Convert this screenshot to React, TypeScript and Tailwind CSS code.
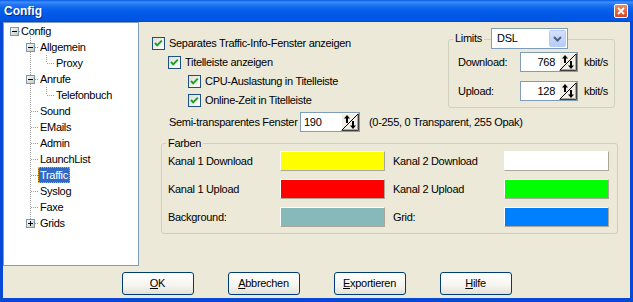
import React from "react";

type TreeItem = { label: string; level: number; box?: "minus" | "plus"; selected?: boolean };

const treeItems: TreeItem[] = [
  { label: "Config", level: 0, box: "minus" },
  { label: "Allgemein", level: 1, box: "minus" },
  { label: "Proxy", level: 2 },
  { label: "Anrufe", level: 1, box: "minus" },
  { label: "Telefonbuch", level: 2 },
  { label: "Sound", level: 1 },
  { label: "EMails", level: 1 },
  { label: "Admin", level: 1 },
  { label: "LaunchList", level: 1 },
  { label: "Traffic", level: 1, selected: true },
  { label: "Syslog", level: 1 },
  { label: "Faxe", level: 1 },
  { label: "Grids", level: 1, box: "plus" },
];

const indentClass: Record<number, string> = {
  0: "pl-[17px]",
  1: "pl-[34px]",
  2: "pl-[50px]",
};

function ExpandBox({ cx, cy, kind }: { cx: number; cy: number; kind: "minus" | "plus" }) {
  return (
    <g>
      <rect x={cx - 4 + 0.5} y={cy - 4 + 0.5} width={8} height={8} fill="url(#boxfill)" stroke="#7898B5" />
      <line x1={cx - 2} y1={cy + 0.5} x2={cx + 3} y2={cy + 0.5} stroke="#000" />
      {kind === "plus" && <line x1={cx + 0.5} y1={cy - 2} x2={cx + 0.5} y2={cy + 3} stroke="#000" />}
    </g>
  );
}

function TreeLines() {
  const rowY = (i: number) => 16 * i + 8;
  const dot = { stroke: "#A0A0A0", strokeDasharray: "1 1", shapeRendering: "crispEdges" as const };
  return (
    <svg className="absolute left-0 top-0 pointer-events-none" width={134} height={240}>
      <defs>
        <linearGradient id="boxfill" x1="0" y1="0" x2="1" y2="1">
          <stop offset="0" stopColor="#FFFFFF" />
          <stop offset="1" stopColor="#C6C3B5" />
        </linearGradient>
      </defs>
      {/* level 1 trunk */}
      <line x1={26.5} y1={13} x2={26.5} y2={rowY(12)} {...dot} />
      {/* level 0 stub */}
      <line x1={15} y1={8.5} x2={17} y2={8.5} {...dot} />
      {treeItems.map((it, i) =>
        it.level === 1 ? (
          <line key={i} x1={it.box ? 31 : 27} y1={rowY(i) + 0.5} x2={34} y2={rowY(i) + 0.5} {...dot} />
        ) : null
      )}
      {/* level 2 branches */}
      {[2, 4].map((i) => (
        <g key={i}>
          <line x1={42.5} y1={rowY(i) - 8} x2={42.5} y2={rowY(i)} {...dot} />
          <line x1={43} y1={rowY(i) + 0.5} x2={50} y2={rowY(i) + 0.5} {...dot} />
        </g>
      ))}
      <ExpandBox cx={10} cy={8} kind="minus" />
      <ExpandBox cx={26} cy={rowY(1)} kind="minus" />
      <ExpandBox cx={26} cy={rowY(3)} kind="minus" />
      <ExpandBox cx={26} cy={rowY(12)} kind="plus" />
    </svg>
  );
}

function CheckBox() {
  return (
    <svg width={13} height={13} className="shrink-0">
      <defs>
        <linearGradient id="cbfill" x1="0" y1="0" x2="1" y2="1">
          <stop offset="0" stopColor="#DCDCD7" />
          <stop offset="1" stopColor="#FFFFFF" />
        </linearGradient>
      </defs>
      <rect x={0.5} y={0.5} width={12} height={12} fill="url(#cbfill)" stroke="#1C5180" />
      <path d="M3 6 L5.2 8.4 L9.8 3.6" fill="none" stroke="#21A121" strokeWidth={2} />
    </svg>
  );
}

function CheckRow({ label, indent }: { label: string; indent: string }) {
  return (
    <div className={`flex items-center h-[19px] gap-[4px] ${indent}`}>
      <CheckBox />
      <span>{label}</span>
    </div>
  );
}

function SpinButton() {
  return (
    <svg width={18} height={18} className="shrink-0">
      <rect x={0} y={0} width={18} height={18} fill="#F1EFE6" />
      <path d="M0.5 17.5V0.5H17.5" fill="none" stroke="#FFFFFF" />
      <path d="M0.5 17.5H17.5V0.5" fill="none" stroke="#404040" />
      <path d="M1.5 16.5H16.5V1.5" fill="none" stroke="#ACA899" />
      <line x1={1} y1={17} x2={17} y2={1} stroke="#000" />
      <polygon points="6,2 9,5.5 7,5.5 7,10 5,10 5,5.5 3,5.5" fill="#000" />
      <polygon points="12,16 15,12.5 13,12.5 13,8 11,8 11,12.5 9,12.5" fill="#000" />
    </svg>
  );
}

function SpinEdit({ value, width, align }: { value: string; width: string; align: "left" | "right" }) {
  return (
    <div className="flex items-center h-[20px] border border-[#7F9DB9] bg-white">
      <div className={`${width} ${align === "right" ? "text-right pr-[4px]" : "pl-[3px]"}`}>{value}</div>
      <SpinButton />
    </div>
  );
}

function Swatch({ color }: { color: string }) {
  return (
    <div
      className={`w-[105px] h-[20px] border border-t-white border-l-white border-r-[#ACA899] border-b-[#ACA899] ${color}`}
    />
  );
}

function XpButton({ first, rest }: { first: string; rest: string }) {
  return (
    <div className="w-[72px] h-[23px] flex items-center justify-center rounded-[3px] border border-[#003C74] bg-[linear-gradient(to_bottom,#FFFFFF_0%,#F5F4EF_60%,#E3E1D6_100%)]">
      <span>
        <span className="underline">{first}</span>
        {rest}
      </span>
    </div>
  );
}

export default function App() {
  return (
    <div className="w-[633px] h-[302px] flex flex-col bg-[#0848D6] text-[11px] tracking-[-0.3px] text-black font-['Liberation_Sans',Arial,sans-serif] overflow-hidden">
      {/* Title bar */}
      <div className="h-[22px] shrink-0 flex items-center justify-between pl-[4px] pr-[5px] bg-[linear-gradient(to_bottom,#0A5DE8_0%,#3D8FFB_10%,#2477F3_20%,#0862EC_40%,#0058E6_70%,#0056E4_90%,#0349CF_100%)]">
        <span className="text-white font-bold text-[12px] tracking-normal [text-shadow:1px_1px_0_#0A2A8A]">Config</span>
        <div className="w-[14px] h-[14px] rounded-[2px] border border-white bg-[linear-gradient(to_bottom,#E88B6C,#D7491F)] flex items-center justify-center">
          <svg width={8} height={8}>
            <path d="M1 1 L7 7 M7 1 L1 7" stroke="#fff" strokeWidth={1.8} />
          </svg>
        </div>
      </div>

      {/* Client area */}
      <div className="flex-1 flex flex-col mx-[3px] mb-[4px] bg-[#ECE9D8]">
        <div className="flex h-[244px]">
          {/* Tree */}
          <div className="w-[136px] h-full border border-[#7F9DB9] bg-white">
            <div className="relative">
              <TreeLines />
              {treeItems.map((it) => (
                <div key={it.label} className={`relative h-[16px] flex items-center ${indentClass[it.level]}`}>
                  {it.selected ? (
                    <span className="h-[16px] flex items-center px-[2px] bg-[#316AC5] text-white outline-1 outline-dotted outline-[#E8A838] -outline-offset-1">
                      {it.label}
                    </span>
                  ) : (
                    <span className={it.level === 0 ? "" : "pl-[2px]"}>{it.label}</span>
                  )}
                </div>
              ))}
            </div>
          </div>

          {/* Right panel */}
          <div className="flex-1 flex flex-col">
            <div className="flex items-start">
              <div className="pt-[12px] pl-[13px]">
                <CheckRow label="Separates Traffic-Info-Fenster anzeigen" indent="" />
                <CheckRow label="Titelleiste anzeigen" indent="pl-[16px]" />
                <CheckRow label="CPU-Auslastung in Titelleiste" indent="pl-[36px]" />
                <CheckRow label="Online-Zeit in Titelleiste" indent="pl-[36px]" />
              </div>

              {/* Limits group */}
              <div className="relative ml-auto mr-[15px] mt-[17px] w-[167px] h-[69px] border border-[#D0D0BF] rounded-[3px] pt-[12px] pl-[9px]">
                <span className="absolute left-[4px] top-[-8px] px-[2px] bg-[#ECE9D8] leading-[13px]">Limits</span>
                <div className="absolute left-[42px] top-[-12px] w-[77px] h-[21px] border border-[#7F9DB9] bg-white flex items-center justify-between">
                  <span className="pl-[5px]">DSL</span>
                  <div className="w-[17px] h-[17px] mr-[1px] rounded-[2px] border border-[#B9CCF6] bg-[linear-gradient(to_bottom,#D4E0FD,#B7CCF8)] flex items-center justify-center">
                    <svg width={9} height={6}>
                      <path d="M1 1 L4.5 4.5 L8 1" fill="none" stroke="#4D6185" strokeWidth={2} />
                    </svg>
                  </div>
                </div>
                <div className="flex items-center">
                  <span className="w-[62px]">Download:</span>
                  <SpinEdit value="768" width="w-[38px]" align="right" />
                  <span className="ml-[6px]">kbit/s</span>
                </div>
                <div className="flex items-center mt-[9px]">
                  <span className="w-[62px]">Upload:</span>
                  <SpinEdit value="128" width="w-[38px]" align="right" />
                  <span className="ml-[6px]">kbit/s</span>
                </div>
              </div>
            </div>

            {/* Semi-transparent */}
            <div className="flex items-center mt-[2px] pl-[30px]">
              <span className="w-[131px]">Semi-transparentes Fenster</span>
              <SpinEdit value="190" width="w-[40px]" align="left" />
              <span className="ml-[9px]">(0-255, 0 Transparent, 255 Opak)</span>
            </div>

            {/* Farben group */}
            <div className="relative mt-[11px] ml-[22px] w-[457px] h-[91px] border border-[#D0D0BF] rounded-[3px] pt-[7px] pl-[6px] flex flex-col gap-[8px]">
              <span className="absolute left-[4px] top-[-7px] px-[2px] bg-[#ECE9D8] leading-[13px]">Farben</span>
              <div className="flex items-center">
                <span className="w-[112px]">Kanal 1 Download</span>
                <Swatch color="bg-[#FFFF00]" />
                <span className="w-[111px] ml-[8px]">Kanal 2 Download</span>
                <Swatch color="bg-white" />
              </div>
              <div className="flex items-center">
                <span className="w-[112px]">Kanal 1 Upload</span>
                <Swatch color="bg-[#FF0000]" />
                <span className="w-[111px] ml-[8px]">Kanal 2 Upload</span>
                <Swatch color="bg-[#00FF00]" />
              </div>
              <div className="flex items-center">
                <span className="w-[112px]">Background:</span>
                <Swatch color="bg-[#87B9BA]" />
                <span className="w-[111px] ml-[8px]">Grid:</span>
                <Swatch color="bg-[#0080FF]" />
              </div>
            </div>
          </div>
        </div>

        {/* Buttons */}
        <div className="flex justify-center gap-[34px] pt-[6px]">
          <XpButton first="O" rest="K" />
          <XpButton first="A" rest="bbrechen" />
          <XpButton first="E" rest="xportieren" />
          <XpButton first="H" rest="ilfe" />
        </div>
      </div>
    </div>
  );
}
